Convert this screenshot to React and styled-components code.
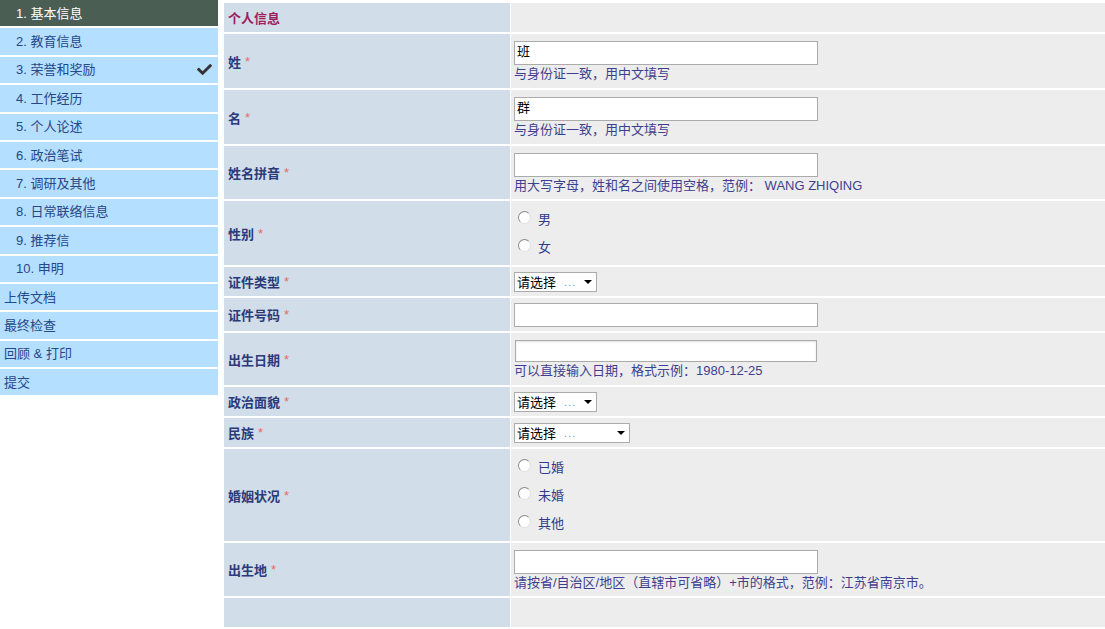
import React from "react";
import styled, { createGlobalStyle } from "styled-components";
import { FaCheck } from "react-icons/fa";

const GlobalStyle = createGlobalStyle`
  html, body {
    margin: 0;
    padding: 0;
    background: #fff;
    font-family: "Liberation Sans", "Noto Sans CJK SC", sans-serif;
    font-size: 13px;
  }
`;

const Page = styled.div`
  display: flex;
  align-items: flex-start;
  gap: 6px;
  width: 1105px;
`;

const Sidebar = styled.ul`
  list-style: none;
  margin: 0;
  padding: 0;
  width: 218px;
  flex: none;
`;

const NavItem = styled.li`
  display: flex;
  align-items: center;
  justify-content: space-between;
  height: 26.4px;
  box-sizing: content-box;
  border-bottom: 2px solid #fff;
  padding: 0 6px 0 ${(p) => (p.$indent ? "16px" : "4px")};
  background: ${(p) => (p.$active ? "#4b5e53" : "#b4dfff")};
  color: ${(p) => (p.$active ? "#fff" : "#26478a")};
  font-size: 13px;

  span {
    position: relative;
    top: -1px;
  }
`;

const Form = styled.div`
  flex: 1;
  margin-top: 3px;
  display: grid;
  grid-template-columns: 286px 1fr;
  gap: 2px 1px;
`;

const Label = styled.div`
  display: flex;
  align-items: center;
  height: ${(p) => p.$h}px;
  padding-left: 4px;
  background: #d1dde8;
  color: ${(p) => (p.$section ? "#9c1f5f" : "#2a3a7a")};
  font-weight: bold;
  font-size: 13px;
`;

const Star = styled.span`
  color: #e86a6a;
  font-weight: normal;
  margin-left: 4px;
`;

const Value = styled.div`
  display: flex;
  flex-direction: column;
  justify-content: ${(p) => (p.$center ? "center" : "flex-start")};
  height: ${(p) => p.$h}px;
  overflow: hidden;
  padding: ${(p) => (p.$center ? "0 3px" : "7px 3px 0")};
  box-sizing: border-box;
  background: #ededed;
`;

const TextBox = styled.div`
  flex: none;
  box-sizing: border-box;
  border: 1px solid #ababab;
  background: #fff;
  color: #000;
  font-size: 13px;
  line-height: 20px;
  padding-left: 2px;
  margin-left: ${(p) => (p.$shift ? "1px" : "0")};
  width: ${(p) => (p.$shift ? "302px" : "304px")};
  height: ${(p) => (p.$shift ? "22px" : "24px")};
  box-shadow: ${(p) => (p.$shift ? "inset 0 1px 2px rgba(0,0,0,0.12)" : "none")};
`;

const Hint = styled.div`
  margin-top: 0;
  line-height: 18px;
  color: #3f3f8f;
  font-size: 13px;
  white-space: nowrap;
`;

const Select = styled.div`
  display: flex;
  align-items: center;
  width: ${(p) => p.$w}px;
  height: 20px;
  box-sizing: border-box;
  border: 1px solid #ababab;
  background: #fff;
  padding: 0 4px 0 2px;
  font-size: 13px;
  color: #000;
`;

const Dots = styled.span`
  color: #4aa0d8;
  margin-left: 8px;
  letter-spacing: 1px;
  font-size: 11px;
`;

const Caret = styled.span`
  margin-left: auto;
  width: 0;
  height: 0;
  border-left: 4px solid transparent;
  border-right: 4px solid transparent;
  border-top: 4px solid #000;
`;

const RadioList = styled.div`
  display: flex;
  flex-direction: column;
  gap: 10px;
  padding: 3px 0 0 4px;
`;

const RadioRow = styled.label`
  display: flex;
  align-items: flex-start;
  gap: 7px;
  color: #2e3c8a;
  font-size: 13px;
  line-height: 18px;
  height: 18px;
`;

const Radio = styled.span`
  width: 11px;
  height: 11px;
  border-radius: 50%;
  border: 1px solid #8a8a8a;
  border-right-color: #ddd;
  border-bottom-color: #ddd;
  background: #fff;
  flex: none;
`;

const nav = [
  { t: "1. 基本信息", indent: true, active: true },
  { t: "2. 教育信息", indent: true },
  { t: "3. 荣誉和奖励", indent: true, done: true },
  { t: "4. 工作经历", indent: true },
  { t: "5. 个人论述", indent: true },
  { t: "6. 政治笔试", indent: true },
  { t: "7. 调研及其他", indent: true },
  { t: "8. 日常联络信息", indent: true },
  { t: "9. 推荐信", indent: true },
  { t: "10. 申明", indent: true },
  { t: "上传文档" },
  { t: "最终检查" },
  { t: "回顾 & 打印" },
  { t: "提交" },
];

function Field({ label, h, center, children }) {
  return (
    <>
      <Label $h={h}>
        {label}
        <Star>*</Star>
      </Label>
      <Value $h={h} $center={center}>
        {children}
      </Value>
    </>
  );
}

function Choice({ w }) {
  return (
    <Select $w={w}>
      请选择<Dots>...</Dots>
      <Caret />
    </Select>
  );
}

function Radios({ items }) {
  return (
    <RadioList>
      {items.map((i) => (
        <RadioRow key={i}>
          <Radio />
          {i}
        </RadioRow>
      ))}
    </RadioList>
  );
}

export default function App() {
  return (
    <>
      <GlobalStyle />
      <Page>
        <Sidebar>
          {nav.map((n) => (
            <NavItem key={n.t} $indent={n.indent} $active={n.active}>
              <span>{n.t}</span>
              {n.done && <FaCheck size={15} color="#333" />}
            </NavItem>
          ))}
        </Sidebar>
        <Form>
          <Label $h={29} $section>个人信息</Label>
          <Value $h={29} />

          <Field label="姓" h={54}>
            <TextBox>班</TextBox>
            <Hint>与身份证一致，用中文填写</Hint>
          </Field>
          <Field label="名" h={54}>
            <TextBox>群</TextBox>
            <Hint>与身份证一致，用中文填写</Hint>
          </Field>
          <Field label="姓名拼音" h={53}>
            <TextBox />
            <Hint>用大写字母，姓和名之间使用空格，范例： WANG ZHIQING</Hint>
          </Field>
          <Field label="性别" h={64}>
            <Radios items={["男", "女"]} />
          </Field>
          <Field label="证件类型" h={29} center>
            <Choice w={83} />
          </Field>
          <Field label="证件号码" h={33} center>
            <TextBox />
          </Field>
          <Field label="出生日期" h={52}>
            <TextBox $shift />
            <Hint>可以直接输入日期，格式示例：1980-12-25</Hint>
          </Field>
          <Field label="政治面貌" h={29} center>
            <Choice w={83} />
          </Field>
          <Field label="民族" h={29} center>
            <Choice w={116} />
          </Field>
          <Field label="婚姻状况" h={92}>
            <Radios items={["已婚", "未婚", "其他"]} />
          </Field>
          <Field label="出生地" h={53}>
            <TextBox />
            <Hint>请按省/自治区/地区（直辖市可省略）+市的格式，范例：江苏省南京市。</Hint>
          </Field>

          <Label $h={29} />
          <Value $h={29} />
        </Form>
      </Page>
    </>
  );
}
